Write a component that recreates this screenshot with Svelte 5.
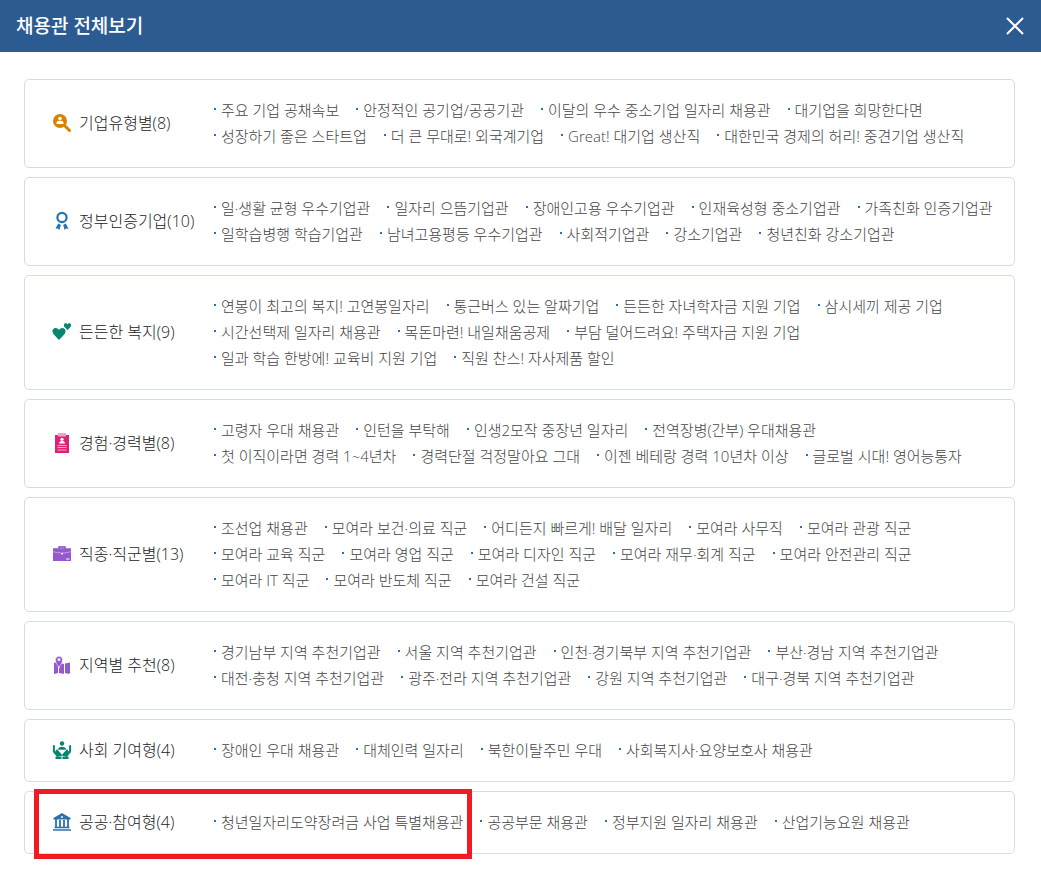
<script>
  const groups = [
    { icon: 'search', name: '기업유형별', items: ['주요 기업 공채속보', '안정적인 공기업/공공기관', '이달의 우수 중소기업 일자리 채용관', '대기업을 희망한다면', '성장하기 좋은 스타트업', '더 큰 무대로! 외국계기업', 'Great! 대기업 생산직', '대한민국 경제의 허리! 중견기업 생산직'] },
    { icon: 'medal', name: '정부인증기업', items: ['일·생활 균형 우수기업관', '일자리 으뜸기업관', '장애인고용 우수기업관', '인재육성형 중소기업관', '가족친화 인증기업관', '일학습병행 학습기업관', '남녀고용평등 우수기업관', '사회적기업관', '강소기업관', '청년친화 강소기업관'] },
    { icon: 'hearts', name: '든든한 복지', items: ['연봉이 최고의 복지! 고연봉일자리', '통근버스 있는 알짜기업', '든든한 자녀학자금 지원 기업', '삼시세끼 제공 기업', '시간선택제 일자리 채용관', '목돈마련! 내일채움공제', '부담 덜어드려요! 주택자금 지원 기업', '일과 학습 한방에! 교육비 지원 기업', '직원 찬스! 자사제품 할인'] },
    { icon: 'resume', name: '경험·경력별', items: ['고령자 우대 채용관', '인턴을 부탁해', '인생2모작 중장년 일자리', '전역장병(간부) 우대채용관', '첫 이직이라면 경력 1~4년차', '경력단절 걱정말아요 그대', '이젠 베테랑 경력 10년차 이상', '글로벌 시대! 영어능통자'] },
    { icon: 'briefcase', name: '직종·직군별', items: ['조선업 채용관', '모여라 보건·의료 직군', '어디든지 빠르게! 배달 일자리', '모여라 사무직', '모여라 관광 직군', '모여라 교육 직군', '모여라 영업 직군', '모여라 디자인 직군', '모여라 재무·회계 직군', '모여라 안전관리 직군', '모여라 IT 직군', '모여라 반도체 직군', '모여라 건설 직군'] },
    { icon: 'map', name: '지역별 추천', items: ['경기남부 지역 추천기업관', '서울 지역 추천기업관', '인천·경기북부 지역 추천기업관', '부산·경남 지역 추천기업관', '대전·충청 지역 추천기업관', '광주·전라 지역 추천기업관', '강원 지역 추천기업관', '대구·경북 지역 추천기업관'] },
    { icon: 'care', name: '사회 기여형', items: ['장애인 우대 채용관', '대체인력 일자리', '북한이탈주민 우대', '사회복지사·요양보호사 채용관'] },
    { icon: 'public', name: '공공·참여형', marked: true, items: ['청년일자리도약장려금 사업 특별채용관', '공공부문 채용관', '정부지원 일자리 채용관', '산업기능요원 채용관'] }
  ];
</script>

<header>
  <h1>채용관 전체보기</h1>
  <button type="button" aria-label="닫기">
    <svg width="18" height="18" viewBox="0 0 18 18"><path d="M1 1 17 17M17 1 1 17" stroke="#fff" stroke-width="2" fill="none" /></svg>
  </button>
</header>

<main>
  {#each groups as group}
    <section class:marked={group.marked}>
      <h2>
        <svg class="icon" width="20" height="20" viewBox="0 0 20 20" aria-hidden="true">
          {#if group.icon === 'search'}
            <path d="m12 12 5.500 5.500" stroke="#d98300" stroke-width="3" stroke-linecap="round" />
            <circle cx="8" cy="8" r="7" fill="#d98300" />
            <circle cx="8" cy="5.500" r="1.800" fill="#fff" />
            <path d="M4.500 11V9.800c0-1.300 1.200-2 2.300-2h2.400c1.100 0 2.300.7 2.300 2V11Z" fill="#fff" />
          {:else if group.icon === 'medal'}
            <circle cx="10" cy="6.500" r="4.600" fill="none" stroke="#2872b3" stroke-width="2.200" />
            <path d="m6.200 12.500 2.700 1.500-1.600 5-1.600-1.400-2.200.2ZM13.800 12.500 11.100 14l1.600 5 1.600-1.400 2.200.2Z" fill="#2872b3" />
          {:else if group.icon === 'hearts'}
            <path d="M7 18 1.600 12.200C-.8 9.400.8 6 3.600 6 5.300 6 6.500 7 7 8c.6-1 1.800-2 3.400-2 2.800 0 4.400 3.400 2 6.200Z" fill="#078570" />
            <path d="m15.500 8-3-3.100c-1.300-1.400-.4-3.600 1.200-3.600.9 0 1.500.5 1.800 1.100.3-.6 1-1.100 1.800-1.100 1.600 0 2.500 2.200 1.200 3.600Z" fill="#078570" />
          {:else if group.icon === 'resume'}
            <path d="M3 2h14v18H3Z" fill="#df2275" />
            <path d="M6 0h8v3.500H6Z" fill="#f2a2c5" />
            <circle cx="10" cy="6.300" r="1.600" fill="#fff" />
            <path d="M7 10.500c0-1.400 1.200-2.500 3-2.500s3 1.100 3 2.500Z" fill="#fff" />
            <path d="M5.500 12.500h9M5.500 14.500h9M5.500 17h9" stroke="#f7a6c8" stroke-width="1" />
          {:else if group.icon === 'briefcase'}
            <path d="M7 4.500V3h6v1.500" fill="none" stroke="#7744bd" stroke-width="1.400" />
            <path d="M1 4.200h18V17H1Z" fill="#945acd" />
            <path d="M1 7.700c5 1.700 13 1.700 18 0" fill="none" stroke="#c8a9e6" stroke-width=".8" />
            <path d="M9.200 9h1.600v1.500H9.200Z" fill="#fff" />
            <path d="M14 15h3.500" stroke="#e6d8f3" stroke-width="1.300" />
          {:else if group.icon === 'map'}
            <path d="m2 7.500 4 .5v10l-4 1ZM7 12.500h1V8l4 1v10l-5-1ZM13 8.500l5-1V18l-1 1-4-1Z" fill="#945acd" />
            <path d="M7 12.500C4.500 9 3.500 7 3.500 4.800a3.500 3.500 0 0 1 7 0C10.500 7 9.500 9 7 12.500Z" fill="#945acd" stroke="#fff" stroke-width=".5" />
            <circle cx="7" cy="4.700" r="1.400" fill="#fff" />
          {:else if group.icon === 'care'}
            <circle cx="10" cy="3.500" r="2.200" fill="#078570" />
            <path d="M6 9.700C6 7.800 7.500 6.700 10 6.700s4 1.100 4 3Z" fill="#078570" />
            <path d="M1.900 6v5.500l3.800 4.500M18.100 6v5.500L14.300 16M4.800 10.500l4.100 4.500M15.200 10.500 11.100 15" fill="none" stroke="#078570" stroke-width="2" stroke-linecap="round" stroke-linejoin="round" />
            <path d="M2 11.500 5 11l4.500 5H5.500ZM18 11.500 15 11l-4.500 5h4Z" fill="#078570" />
            <path d="M3.500 16.500h6v2.500h-6ZM10.500 16.500h6v2.500h-6Z" fill="#078570" />
          {:else}
            <path d="m10 1 8.500 5v1.500h-17V6Z" fill="#2872b3" />
            <circle cx="10" cy="5" r="1" fill="#fff" />
            <path d="M4 7v9M8 8v8M12 8v8M16 7v9" stroke="#2872b3" stroke-width="1.800" />
            <path d="M2.500 15.500h15M1 18h18" stroke="#2872b3" stroke-width="1.500" />
          {/if}
        </svg>
        <span>{group.name}({group.items.length})</span>
      </h2>
      <ul>
        {#each group.items as item}
          <li><a href="#top">{item}</a></li>
        {/each}
      </ul>
    </section>
  {/each}
</main>

<style>
  :global(body) {
    margin: 0;
    background: #fff;
    font-family: 'Open Sans', 'Noto Sans CJK KR', sans-serif;
  }
  header {
    display: flex;
    align-items: center;
    justify-content: space-between;
    height: 52px;
    padding: 0 17px 0 16px;
    background: #2c5b91;
    color: #fff;
  }
  h1 {
    margin: 0;
    font-size: 19px;
    font-weight: 500;
    line-height: 26px;
  }
  button {
    display: flex;
    padding: 0;
    border: 0;
    background: none;
    cursor: pointer;
  }
  main {
    display: flex;
    flex-direction: column;
    gap: 9px;
    padding: 27px 26px 34px 24px;
  }
  section {
    position: relative;
    display: flex;
    align-items: center;
    padding: 17px 16px 18px 27px;
    border: 1px solid #d1dde8;
    border-radius: 5px;
  }
  h2 {
    display: flex;
    align-items: center;
    flex: 0 0 161px;
    gap: 7px;
    margin: 0;
    color: #222;
    font-size: 16px;
    font-weight: 300;
    line-height: 26px;
    white-space: nowrap;
  }
  .icon {
    flex: none;
  }
  ul {
    display: flex;
    flex: 1;
    flex-wrap: wrap;
    column-gap: 16px;
    margin: 0;
    padding: 0;
    list-style: none;
  }
  li {
    position: relative;
    padding-left: 8px;
    font-size: 15px;
    font-weight: 300;
    line-height: 26px;
    white-space: nowrap;
  }
  li::before {
    content: '';
    position: absolute;
    top: 11px;
    left: 1px;
    width: 2px;
    height: 2px;
    background: #2872b3;
  }
  a {
    color: #444;
    text-decoration: none;
  }
  .marked::after {
    content: '';
    position: absolute;
    top: -3px;
    left: 9px;
    width: 428px;
    height: 60px;
    border: 5px solid #ed1c24;
    pointer-events: none;
  }
</style>
